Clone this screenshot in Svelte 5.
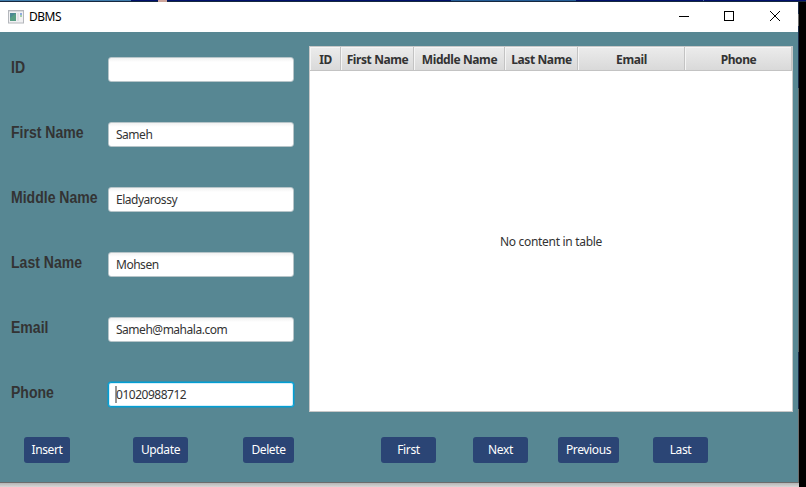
<script>
  const fields = $state([
    { label: 'ID', value: '' },
    { label: 'First Name', value: 'Sameh' },
    { label: 'Middle Name', value: 'Eladyarossy' },
    { label: 'Last Name', value: 'Mohsen' },
    { label: 'Email', value: 'Sameh@mahala.com' },
    { label: 'Phone', value: '01020988712', focused: true }
  ]);
  const columns = [
    { name: 'ID', width: 31 },
    { name: 'First Name', width: 73 },
    { name: 'Middle Name', width: 91 },
    { name: 'Last Name', width: 73 },
    { name: 'Email', width: 107 },
    { name: 'Phone', width: 107 }
  ];
  const actions = [
    { name: 'Insert', gap: 24, width: 46 },
    { name: 'Update', gap: 63, width: 55 },
    { name: 'Delete', gap: 55, width: 51 },
    { name: 'First', gap: 87, width: 55 },
    { name: 'Next', gap: 37, width: 55 },
    { name: 'Previous', gap: 30, width: 61 },
    { name: 'Last', gap: 34, width: 55 }
  ];
</script>

<div class="desktop">
  <div class="strip"><i class="blue"></i><i class="navy"></i><i class="face"></i><i class="navy mid"></i><i class="blue2"></i><i class="navy end"></i><i class="tick"></i><i class="navy last"></i></div>
  <div class="row">
    <main class="window">
      <header>
        <svg class="app" width="16" height="14" viewBox="0 0 16 14">
          <rect x=".5" y=".5" width="15" height="12.5" fill="#f1f1f3" stroke="#b4b7bc" />
          <path d="M1 1h14v1H1z" fill="#d8dade" />
          <path d="M2 3h6v8H2z" fill="#4c8994" />
          <path d="M2 8l6-5v8H2z" fill="#579e84" />
          <path d="M9 3h2v8H9z" fill="#e2e2e6" />
          <path d="M12 3h2v2h-2z" fill="#8eaade" />
          <path d="M12 5h2v2h-2z" fill="#a5cfab" />
        </svg>
        <span class="title">DBMS</span>
        <svg class="controls" width="104" height="12" viewBox="0 0 104 12" fill="none" stroke="#000" stroke-width="1">
          <path d="M0 6.5h10M45.500 1.500h9v9h-9z" shape-rendering="crispEdges" />
          <path d="M91 1l10 10M101 1L91 11" />
        </svg>
      </header>
      <section class="body">
        <form>
          {#each fields as field}
            <div class="field">
              <span class="label"><b>{field.label}</b></span>
              <div class="input" class:focused={field.focused}>
                {#if field.focused}<i class="caret"></i>{/if}<span>{field.value}</span>
              </div>
            </div>
          {/each}
        </form>
        <div class="table">
          <div class="head">
            {#each columns as column}
              <div class="col" style:width="{column.width}px">{column.name}</div>
            {/each}
          </div>
          <div class="empty">No content in table</div>
        </div>
      </section>
      <footer>
        {#each actions as action}
          <button type="button" style:margin-left="{action.gap}px" style:width="{action.width}px">{action.name}</button>
        {/each}
      </footer>
    </main>
    <aside><i></i></aside>
  </div>
  <div class="below"></div>
</div>

<style>
  :global(body) { background: #000; overflow: hidden; }
  .desktop { width: 806px; height: 487px; display: flex; flex-direction: column; background: #000; font: 12px/16px "Noto Sans", "Open Sans", sans-serif; color: #333; }
  .strip { height: 2px; width: 806px; display: flex; box-sizing: border-box; box-shadow: inset 0 -1px #16283f; }
  .strip i { height: 1px; background: #00106c; }
  .strip .blue { width: 131px; background: #3f7cad; }
  .strip .navy { width: 27px; }
  .strip .face { width: 9px; height: 2px; background: #cda49a; }
  .strip .mid { width: 284px; }
  .strip .blue2 { width: 125px; background: #235d98; }
  .strip .end { width: 127px; }
  .strip .tick { width: 1px; background: #4965a4; }
  .strip .last { width: 102px; }
  .row { display: flex; height: 481px; }
  .window { width: 798px; height: 481px; background: #578793; display: flex; flex-direction: column; box-shadow: inset 0 -1px #6c6c6c; }
  header { height: 30px; background: #fff; display: flex; align-items: center; flex: none; }
  .app { margin-left: 8px; margin-top: -1px; }
  .title { margin-left: 5px; color: #000; letter-spacing: -.5px; margin-top: -1px; }
  .controls { margin-left: auto; margin-right: 15px; margin-top: -2px; }
  .body { display: flex; height: 380px; flex: none; }
  form { width: 309px; padding-top: 25px; box-sizing: border-box; }
  .field { height: 65px; display: flex; align-items: flex-start; }
  .label { width: 97px; margin-left: 11px; font: 16px/21px "Liberation Sans", sans-serif; white-space: nowrap; }
  .label b { display: inline-block; transform: scaleX(.877); transform-origin: 0 50%; }
  .input { width: 186px; height: 25px; box-sizing: border-box; border: 1px solid #b7c5c9; border-radius: 3px; background: linear-gradient(#f1f1f1, #fff 4px); padding: 3px 7px; display: flex; align-items: center; letter-spacing: -.48px; }
  .input.focused { border-color: #039ed3; box-shadow: 0 0 0 .5px #039ed3, inset 0 0 0 1px #d5effa; background: #fff; padding: 3px 6px; }
  .caret { width: 2px; height: 17px; background: #969696; margin: 0 -1px 0 0; }
  .table { width: 484px; height: 366px; margin-top: 14px; box-sizing: border-box; border: 1px solid #c8c8c8; background: #fff; display: flex; flex-direction: column; }
  .head { display: flex; height: 24px; box-sizing: border-box; border-bottom: 1px solid #c3c3c3; background: linear-gradient(#ececec, #d9d9d9); flex: none; }
  .col { box-sizing: border-box; height: 23px; padding-left: 1px; border-right: 1px solid #c3c3c3; box-shadow: inset 1px 1px #f5f5f5; font-weight: bold; text-align: center; line-height: 25px; letter-spacing: -.4px; white-space: nowrap; }
  .empty { flex: 1; display: flex; align-items: center; justify-content: center; letter-spacing: -.3px; padding-top: 1px; }
  footer { display: flex; padding-top: 25px; }
  button { flex: none; height: 26px; padding: 0; border: 0; border-radius: 3px; background: #2b4575; color: #fff; font: 12px/26px "Noto Sans", "Open Sans", sans-serif; letter-spacing: -.38px; }
  aside { width: 1px; background: linear-gradient(#1b2b47 0 12px, #6b6b6b 12px 24px, #1b2b47 24px 86px, #5c6366 86px 350px, #1b2b47 350px 407px, #6c6c6c 407px); }
  .below { height: 4px; width: 799px; background: linear-gradient(#b5b5b5, #d7d7d7); }
</style>
